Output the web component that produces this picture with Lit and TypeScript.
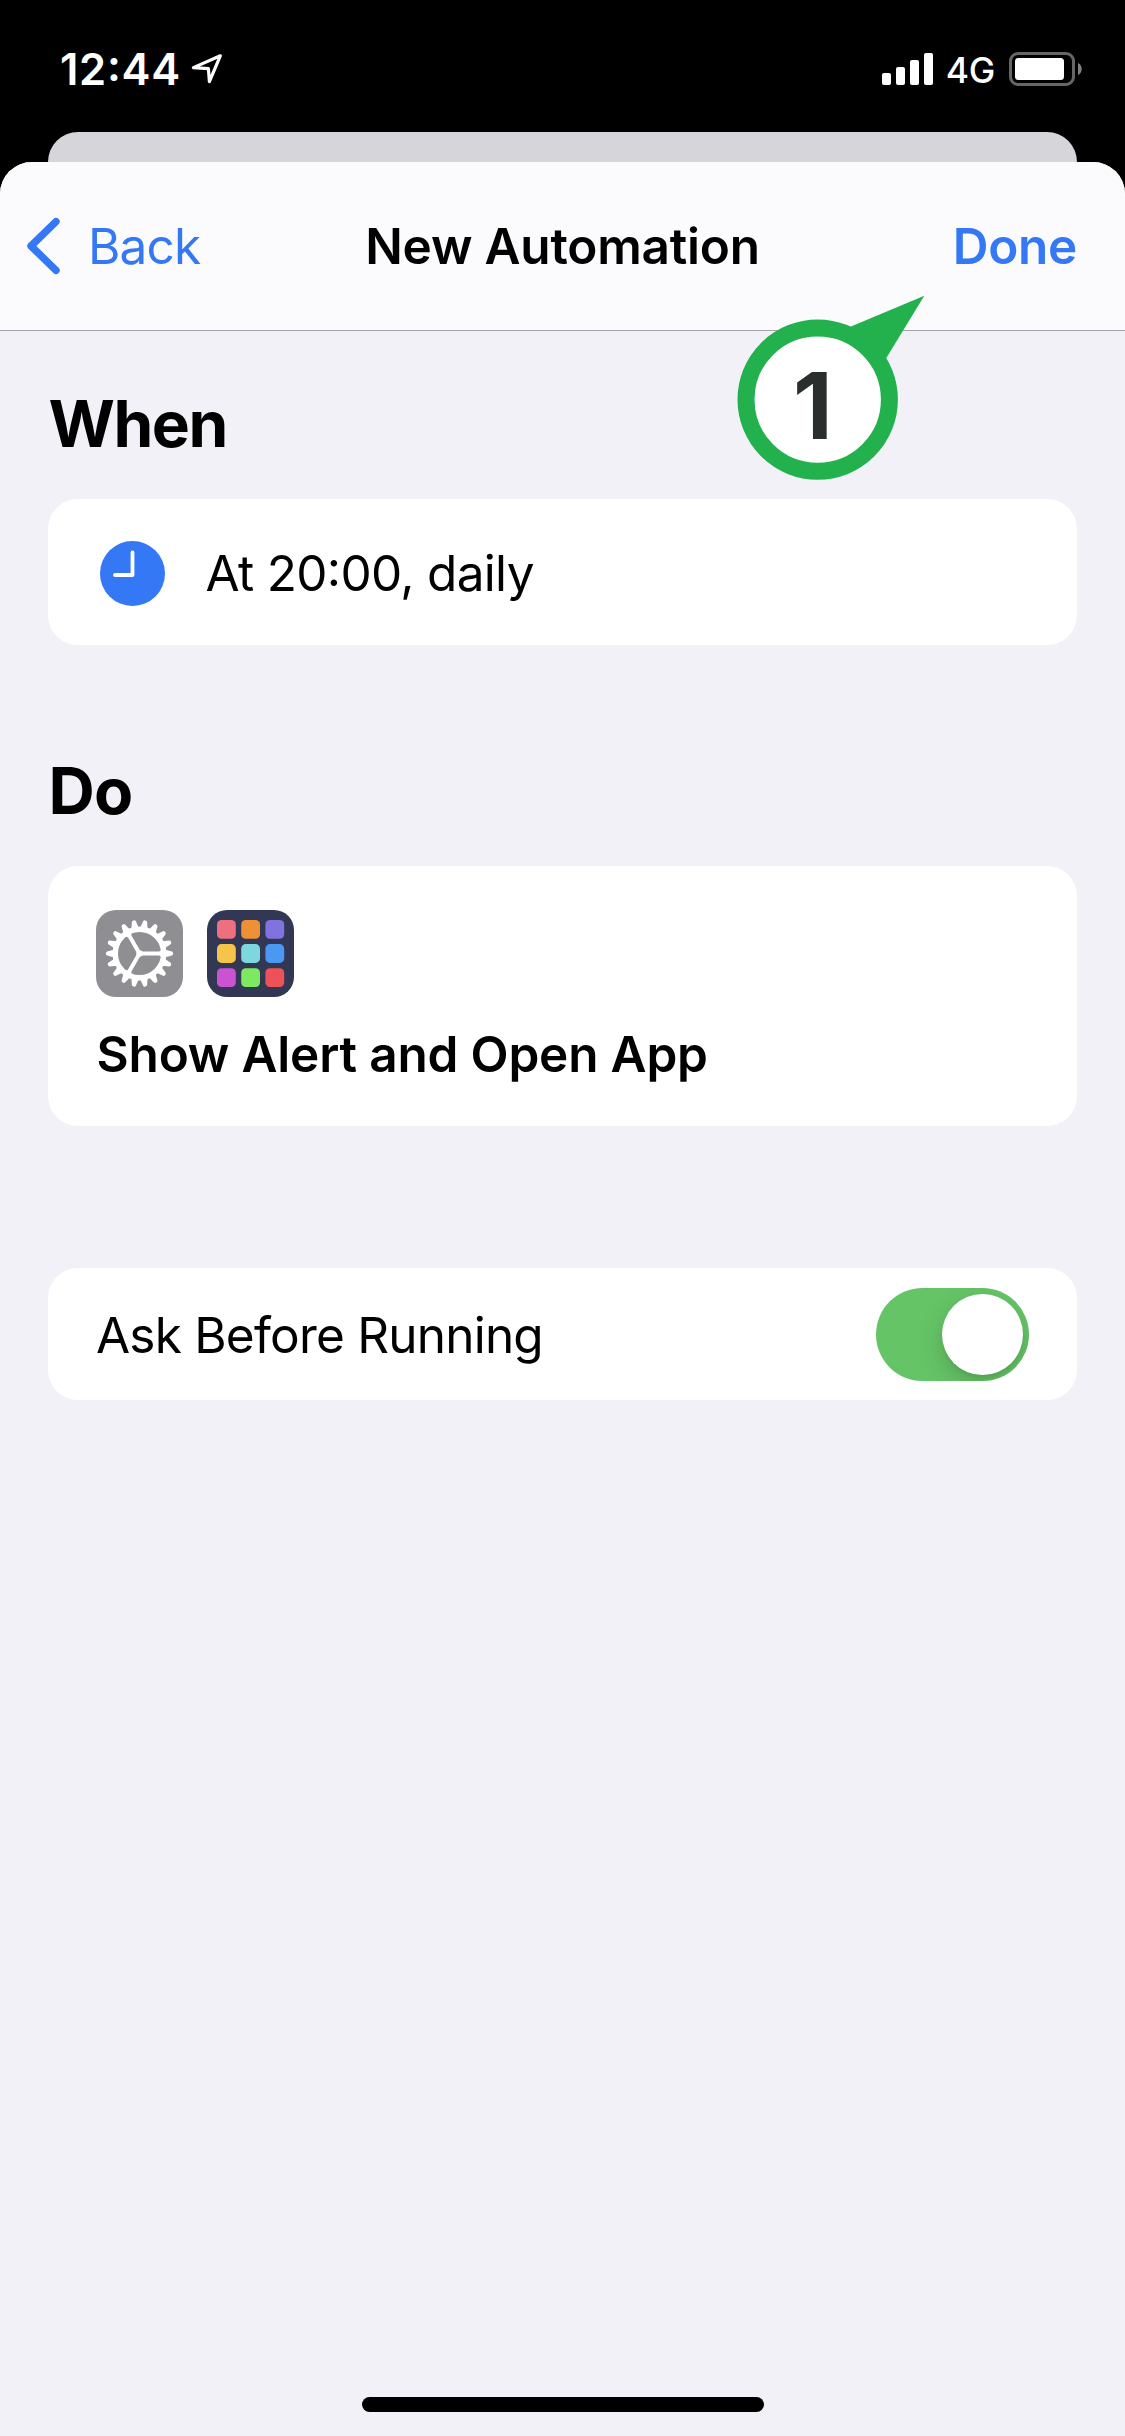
import { LitElement, html, svg, css } from "lit";
import { customElement } from "lit/decorators.js";

const TILE_COLORS = [
  "#ee707e", "#ee9036", "#8073e0",
  "#f5c549", "#7cd7de", "#4a98f1",
  "#ca53d2", "#7de862", "#ec5257",
];

@customElement("status-bar")
class StatusBar extends LitElement {
  static styles = css`
    :host { display: flex; height: 132px; box-sizing: border-box; padding: 0 43px 0 60px; color: #fff; justify-content: space-between; }
    .left, .right { display: flex; height: 138px; align-items: center; }
    .time { font-size: 43.5px; font-weight: 600; line-height: 60px; letter-spacing: 0.7px; margin-right: 10px; font-feature-settings: "calt" 1; }
    .net { font-size: 35.5px; font-weight: 450; line-height: 60px; margin: 3px 14px 0 13px; letter-spacing: -0.3px; }
    svg { display: block; }
  `;
  render() {
    return html`
      <div class="left">
        <span class="time">12:44</span>
        <svg width="32" height="32" viewBox="0 0 32 32" fill="none" stroke="#fff" stroke-width="3.2" stroke-linejoin="round">
          <path d="M29.3 2.8 L2.4 14.6 L17.4 15.6 L18.4 28.6 Z" />
        </svg>
      </div>
      <div class="right">
        <svg width="51" height="32" viewBox="0 0 51 32" fill="#fff">
          <rect x="0" y="20" width="9" height="12" rx="2" />
          <rect x="14" y="14" width="9" height="18" rx="2" />
          <rect x="28" y="7" width="9" height="25" rx="2" />
          <rect x="42" y="0" width="9" height="32" rx="2" />
        </svg>
        <span class="net">4G</span>
        <svg width="73" height="34" viewBox="0 0 73 34">
          <rect x="1.5" y="1.5" width="63" height="31" rx="7.5" fill="none" stroke="#666" stroke-width="3" />
          <rect x="6" y="6" width="49" height="22" rx="3.5" fill="#fff" />
          <path d="M69 11 C74 13 74 21 69 23 Z" fill="#808080" />
        </svg>
      </div>
    `;
  }
}

@customElement("nav-header")
class NavHeader extends LitElement {
  static styles = css`
    :host { display: grid; grid-template-columns: 1fr auto 1fr; align-items: center; height: 169px; box-sizing: border-box;
      border-bottom: 1px solid #a5a5a9; background: #fbfbfd; border-radius: 32px 32px 0 0; padding: 0 26px; font-size: 49.5px; line-height: 60px; }
    .back { display: flex; align-items: center; color: #3478f6; gap: 27px; letter-spacing: -0.8px; }
    .title { font-weight: 600; letter-spacing: -0.2px; }
    .done { justify-self: end; font-weight: 600; color: #3478f6; letter-spacing: -0.3px; margin-right: 22px; }
    svg { display: block; }
  `;
  render() {
    return html`
      <div class="back">
        <svg width="35" height="58" viewBox="0 0 35 58" fill="none" stroke="#3478f6" stroke-width="7.4" stroke-linecap="round" stroke-linejoin="round">
          <path d="M30 4.6 L5 29 L30 53.4" />
        </svg>
        <span>Back</span>
      </div>
      <span class="title">New Automation</span>
      <span class="done">Done</span>
    `;
  }
}

@customElement("step-pin")
class StepPin extends LitElement {
  static styles = css`
    :host { display: block; width: 190px; height: 186px; }
    svg { display: block; }
    .num { font: bold 92px Inter, Arial, sans-serif; fill: #2a2f2e; }
  `;
  render() {
    return html`
      <svg width="190" height="186" viewBox="735 295 190 186">
        <path d="M851 326.5 L924.3 295.8 L886.3 358 L860 375 L835 345 Z" fill="#22b14c" />
        <circle cx="817.7" cy="399.6" r="71.7" fill="#fff" stroke="#22b14c" stroke-width="17" />
        <text class="num" x="793" y="438.7">1</text>
      </svg>
    `;
  }
}

@customElement("toggle-switch")
class ToggleSwitch extends LitElement {
  static styles = css`
    :host { display: flex; justify-content: flex-end; width: 153px; height: 93px; box-sizing: border-box; padding: 6px;
      border-radius: 47px; background: #65c466; overflow: hidden; }
    .knob { width: 81px; height: 81px; border-radius: 50%; background: #fff; box-shadow: 0 9px 24px rgba(0, 0, 0, 0.17), 0 3px 3px rgba(0,0,0,0.05); }
  `;
  render() {
    return html`<div class="knob"></div>`;
  }
}

@customElement("app-root")
class AppRoot extends LitElement {
  static styles = css`
    :host { display: block; position: relative; width: 1125px; height: 2436px; overflow: hidden; background: #000; color: #000;
      font-family: Inter, "Liberation Sans", sans-serif; }
    .behind { height: 70px; margin: 0 48px -40px; background: #d6d5da; border-radius: 30px 30px 0 0; }
    .sheet { position: relative; display: flex; flex-direction: column; height: 2274px; box-sizing: border-box; background: #f2f1f7; border-radius: 32px 32px 0 0; }
    .content { display: flex; flex-direction: column; padding: 0 48px; flex: 1; }
    h2 { margin: 54px 0 36px 0.5px; font-size: 64px; line-height: 78px; font-weight: 700; letter-spacing: -1.5px; }
    h2.do { margin-top: 107px; letter-spacing: -0.8px; }
    .card { background: #fff; border-radius: 30px; box-sizing: border-box; display: flex; font-size: 49.5px; line-height: 60px; }
    .when { height: 146px; align-items: center; padding: 2px 52px 0; gap: 40.5px; letter-spacing: -0.68px; font-feature-settings: "calt" 1; }
    .actions { height: 260px; flex-direction: column; padding: 44px 48px; gap: 27px; font-weight: 600; }
    .icons { display: flex; gap: 24px; }
    .label { padding-left: 0.5px; letter-spacing: -0.18px; }
    .ask { margin-top: 142px; height: 132px; align-items: center; justify-content: space-between; padding: 1px 48px 0; letter-spacing: -0.78px; }
    .home { width: 402px; height: 15px; border-radius: 8px; background: #000; margin: 0 auto 24px; position: relative; left: 0.5px; }
    .pin { position: absolute; left: 735px; top: 295px; }
    svg { display: block; }
  `;

  private clock() {
    return html`
      <svg width="65" height="65" viewBox="0 0 65 65">
        <circle cx="32.5" cy="32.5" r="32.5" fill="#3478f6" />
        <path d="M32.5 11.5 V34 H15" fill="none" stroke="#fff" stroke-width="3.8" stroke-linecap="round" stroke-linejoin="round" />
      </svg>
    `;
  }

  private gear() {
    const teeth = Array.from({ length: 18 }, (_, i) => i * 20);
    const spokes = [0, 120, 240];
    return html`
      <svg width="87" height="87" viewBox="-43.5 -43.5 87 87">
        <rect x="-43.5" y="-43.5" width="87" height="87" rx="20" fill="#8e8e93" />
        <circle r="24.2" fill="none" stroke="#fff" stroke-width="5.4" />
        ${teeth.map((a) => svg`<path transform="rotate(${a})" d="M25 -3.9 L32.4 -2 Q33.6 -1.6 33.6 0 Q33.6 1.6 32.4 2 L25 3.9 Z" fill="#fff" />`)}
        ${spokes.map((a) => svg`<path transform="rotate(${a})" d="M0 -2 H19.5 Q21 -2 21.6 -4 L23 0 L21.6 4 Q21 2 19.5 2 H0 Z" fill="#fff" />`)}
        <circle r="3.2" fill="#fff" />
      </svg>
    `;
  }

  private tiles() {
    return html`
      <svg width="87" height="87" viewBox="0 0 87 87">
        <rect width="87" height="87" rx="20" fill="#323853" />
        ${TILE_COLORS.map((c, i) => svg`<rect x=${10 + (i % 3) * 24.2} y=${10 + Math.floor(i / 3) * 24.1} width="18.8" height="18.8" rx="4.5" fill=${c} />`)}
      </svg>
    `;
  }

  render() {
    return html`
      <status-bar></status-bar>
      <div class="behind"></div>
      <div class="sheet">
        <nav-header></nav-header>
        <div class="content">
          <h2>When</h2>
          <div class="card when">${this.clock()}<span>At 20:00, daily</span></div>
          <h2 class="do">Do</h2>
          <div class="card actions">
            <div class="icons">${this.gear()}${this.tiles()}</div>
            <span class="label">Show Alert and Open App</span>
          </div>
          <div class="card ask"><span>Ask Before Running</span><toggle-switch></toggle-switch></div>
        </div>
        <div class="home"></div>
      </div>
      <step-pin class="pin"></step-pin>
    `;
  }
}
